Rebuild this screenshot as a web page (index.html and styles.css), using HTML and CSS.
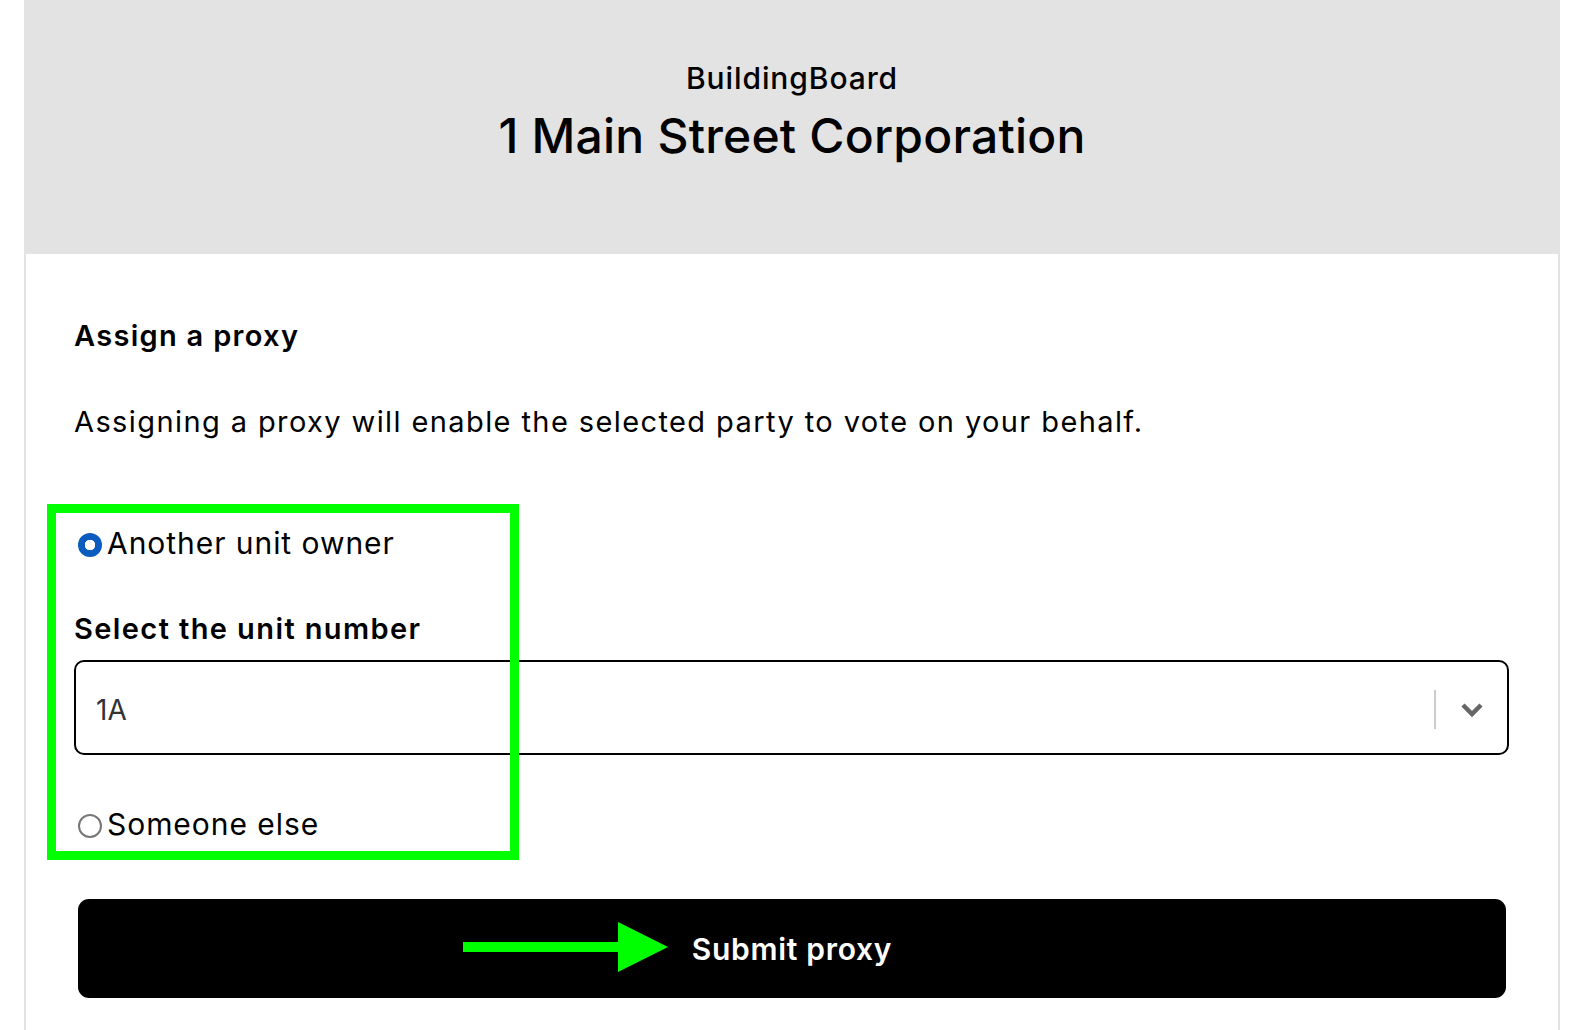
FILE: index.html
```html
<!DOCTYPE html>
<html lang="en">
<head>
  <meta charset="UTF-8">
  <title>Assign a proxy</title>
  <link rel="stylesheet" href="styles.css">
</head>
<body>
  <div class="card">
    <header class="card-header">
      <div class="brand">BuildingBoard</div>
      <h1>1 Main Street Corporation</h1>
    </header>

    <div class="card-body">
      <h3>Assign a proxy</h3>
      <p class="intro">Assigning a proxy will enable the selected party to vote on your behalf.</p>

      <div class="choices">
        <label class="radio-row">
          <input type="radio" name="proxy" value="owner" checked>
          <span>Another unit owner</span>
        </label>

        <div class="field-label">Select the unit number</div>
        <div class="select">
          <div class="select-value">1A</div>
          <span class="select-sep"></span>
          <svg class="select-arrow" width="24" height="16" viewBox="0 0 24 16">
            <path d="M3 3 L12 12 L21 3" fill="none" stroke="#666" stroke-width="4.5" stroke-linejoin="miter"/>
          </svg>
        </div>

        <label class="radio-row other">
          <input type="radio" name="proxy" value="other">
          <span>Someone else</span>
        </label>

        <div class="highlight"></div>
      </div>

      <button class="submit" type="button">
        <svg class="pointer" width="206" height="52" viewBox="0 0 206 52">
          <rect x="0" y="21" width="156" height="10" fill="#00ff00"/>
          <polygon points="155,1 205,26 155,51" fill="#00ff00"/>
        </svg>
        Submit proxy
      </button>
    </div>
  </div>
</body>
</html>
```

FILE: styles.css
```css
body {
  margin: 0;
  background: #fff;
  color: #000;
  font-family: Inter, "Noto Sans", Arial, sans-serif;
}
.card {
  margin-left: 24px;
  width: 1532px;
  min-height: 1030px;
  border-left: 2px solid #e3e3e3;
  border-right: 2px solid #e3e3e3;
}
.card-header {
  background: #e3e3e3;
  height: 254px;
  text-align: center;
  padding-top: 58px;
  box-sizing: border-box;
}
.brand {
  font-size: 30px;
  font-weight: 500;
  line-height: 40px;
  letter-spacing: 0.9px;
}
h1 {
  margin: 0;
  padding-top: 6px;
  font-size: 48px;
  font-weight: 500;
  line-height: 64px;
  letter-spacing: 0.2px;
}
.card-body {
  padding: 0 49px 0 48px;
}
h3 {
  margin: 0;
  padding-top: 60px;
  font-size: 29px;
  font-weight: 600;
  line-height: 44px;
  letter-spacing: 1.3px;
}
.intro {
  margin: 42px 0 0 0;
  font-size: 29px;
  line-height: 44px;
  letter-spacing: 1.4px;
}
.choices {
  position: relative;
  margin-top: 77px;
}
.radio-row {
  display: flex;
  align-items: center;
  gap: 5px;
  font-size: 30px;
  line-height: 44px;
  letter-spacing: 0.95px;
}
.radio-row input {
  appearance: none;
  margin: 4px 0 0 4px;
  width: 24px;
  height: 24px;
  border-radius: 50%;
  border: 2px solid #777;
  box-sizing: border-box;
  background: #fff;
}
.radio-row input:checked {
  border: none;
  background: radial-gradient(circle, #fff 0 5px, #0b5cbf 5.5px);
}
.field-label {
  margin-top: 42px;
  font-size: 29px;
  font-weight: 600;
  line-height: 44px;
  letter-spacing: 1.4px;
}
.select {
  margin-top: 9px;
  height: 95px;
  box-sizing: border-box;
  border: 2px solid #000;
  border-radius: 10px;
  display: flex;
  align-items: center;
  padding: 4px 23px 0 20px;
}
.select-value {
  flex: 1;
  font-size: 28px;
  color: #333;
}
.select-sep {
  width: 2px;
  height: 39px;
  background: #ccc;
  margin-right: 24px;
}
.select-arrow {
  display: block;
}
.other {
  margin-top: 47px;
}
.highlight {
  position: absolute;
  left: -27px;
  top: -17px;
  width: 472px;
  height: 356px;
  box-sizing: border-box;
  border: 9px solid #00ff00;
  pointer-events: none;
}
.submit {
  position: relative;
  display: block;
  width: 1428px;
  height: 99px;
  margin: 53px 0 0 4px;
  border: none;
  border-radius: 11px;
  background: #000;
  color: #fff;
  font-family: inherit;
  font-size: 30px;
  font-weight: 600;
  letter-spacing: 0.7px;
  cursor: pointer;
}
.pointer {
  position: absolute;
  left: 385px;
  top: 22px;
}
```
